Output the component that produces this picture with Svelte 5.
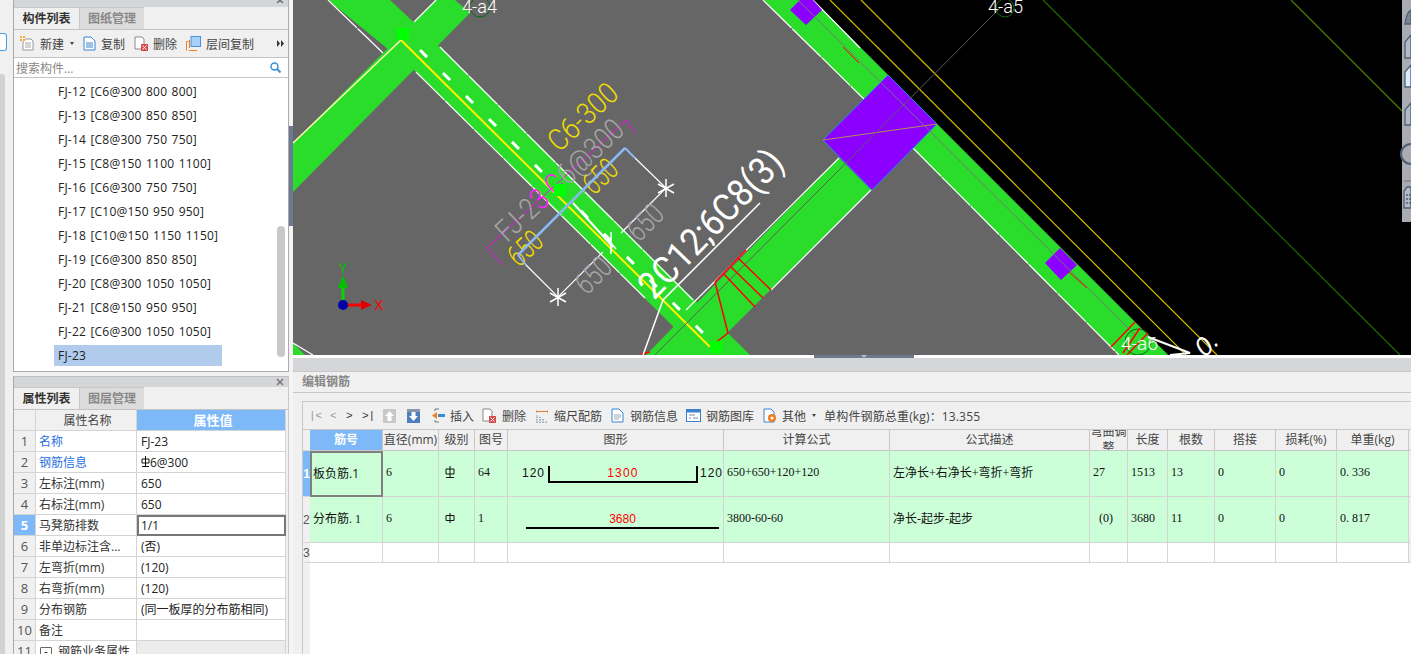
<script>
    const parts = [
        "FJ-12 [C6@300 800 800]", "FJ-13 [C8@300 850 850]", "FJ-14 [C8@300 750 750]",
        "FJ-15 [C8@150 1100 1100]", "FJ-16 [C6@300 750 750]", "FJ-17 [C10@150 950 950]",
        "FJ-18 [C10@150 1150 1150]", "FJ-19 [C6@300 850 850]", "FJ-20 [C8@300 1050 1050]",
        "FJ-21 [C8@150 950 950]", "FJ-22 [C6@300 1050 1050]", "FJ-23"
    ];

    const props = [
        { name: "名称", value: "FJ-23", link: true },
        { name: "钢筋信息", value: "6@300", link: true, symbol: true },
        { name: "左标注(mm)", value: "650" },
        { name: "右标注(mm)", value: "650" },
        { name: "马凳筋排数", value: "1/1", active: true },
        { name: "非单边标注含...", value: "(否)" },
        { name: "左弯折(mm)", value: "(120)" },
        { name: "右弯折(mm)", value: "(120)" },
        { name: "分布钢筋", value: "(同一板厚的分布筋相同)" },
        { name: "备注", value: "" }
    ];

    const heads = ["直径(mm)", "级别", "图号", "图形", "计算公式", "公式描述", "弯曲调整", "长度", "根数", "搭接", "损耗(%)", "单重(kg)"];

    const dashes = "M420 50 L704 334";
</script>

<div class="app">
    <div class="strip">
        <div class="strip-btn"></div>
        <div class="strip-track"></div>
    </div>

    <div class="left">
        <section class="panel list-panel">
            <div class="panel-head clipped">
                <svg class="close" width="8" height="8" viewBox="0 0 8 8"><path d="M1 1l6 6m0-6L1 7" stroke="#777" stroke-width="1.500"/></svg>
            </div>
            <div class="tabs">
                <div class="tab on">构件列表</div>
                <div class="tab">图纸管理</div>
            </div>
            <div class="tools">
                <div class="tool new">
                    <svg width="15" height="15" viewBox="0 0 15 15"><path d="M3 3h8l2 2v9H3z" fill="#fff" stroke="#999"/><path d="M5 7h6M5 9h6M5 11h6" stroke="#aaa"/><rect x="0" y="0" width="5" height="5" fill="#f8a030"/><path d="M0 2.500h5M2.500 0v5" stroke="#fff"/></svg>
                    <span>新建</span><i class="caret"></i>
                </div>
                <div class="tool copy">
                    <svg width="13" height="15" viewBox="0 0 13 15"><path d="M1 1h7l4 4v9H1z" fill="#fff" stroke="#3a82d0"/><path d="M3 7h7M3 9h7M3 11h7" stroke="#3a82d0"/></svg>
                    <span>复制</span>
                </div>
                <div class="tool del">
                    <svg width="14" height="15" viewBox="0 0 14 15"><path d="M1 1h7l2 2v10H1z" fill="#fff" stroke="#888"/><rect x="7" y="8" width="7" height="7" fill="#d84a4a"/><path d="M8.500 9.500l4 4m0-4l-4 4" stroke="#fff"/></svg>
                    <span>删除</span>
                </div>
                <div class="tool floor">
                    <svg width="15" height="15" viewBox="0 0 15 15"><path d="M.5 14.500v-9h2M3 14.500h8M3.500 12v-8" fill="none" stroke="#f08020"/><rect x="5" y="0.500" width="9.500" height="10" fill="#a8d0fa" stroke="#4a90e0"/></svg>
                    <span>层间复制</span>
                </div>
                <svg class="more" width="7" height="7" viewBox="0 0 7 7"><path d="M0 0l3 3.500L0 7zM4 0l3 3.500L4 7z" fill="#333"/></svg>
            </div>
            <div class="search">
                <span>搜索构件...</span>
                <svg width="11" height="11" viewBox="0 0 11 11"><circle cx="4.500" cy="4.500" r="3.500" fill="none" stroke="#3a8fd8" stroke-width="1.500"/><path d="M7 7l3.500 3.500" stroke="#3a8fd8" stroke-width="2"/></svg>
            </div>
            <ul class="parts">
                {#each parts as part, i}
                    <li class:sel={i === parts.length - 1}><span>{part}</span></li>
                {/each}
                <div class="scroll"></div>
            </ul>
        </section>

        <section class="panel prop-panel">
            <div class="panel-head">
                <svg class="close" width="8" height="8" viewBox="0 0 8 8"><path d="M1 1l6 6m0-6L1 7" stroke="#777" stroke-width="1.500"/></svg>
            </div>
            <div class="tabs">
                <div class="tab on">属性列表</div>
                <div class="tab">图层管理</div>
            </div>
            <div class="props">
                <div class="pnum phead"></div>
                <div class="pname phead center">属性名称</div>
                <div class="pval pblue">属性值</div>
                {#each props as p, i}
                    <div class="pnum" class:cur={p.active}>{i + 1}</div>
                    <div class="pname" class:link={p.link}>{p.name}</div>
                    <div class="pval" class:editing={p.active}>
                        {#if p.symbol}
                            <svg width="9" height="11" viewBox="0 0 9 11"><path d="M4.500 0v10M1 3h7v4H1zM1 10.500h7" fill="none" stroke="#111"/></svg>
                        {/if}{p.value}
                    </div>
                {/each}
                <div class="pnum">11</div>
                <div class="pname group"><i class="minus">-</i>钢筋业务属性</div>
                <div class="pval grey"></div>
            </div>
        </section>
    </div>

    <div class="splitter"><div class="handle"></div></div>

    <div class="right">
        <svg class="canvas" width="1118" height="355" viewBox="293 0 1118 355">
            <rect x="293" y="0" width="1118" height="355" fill="#666" />
            <path d="M813 0H1411V355H1168z" fill="#000" />

            <!-- bands -->
            <path d="M293 143L436 0H455L470 13L293 192z" fill="#2bdd2b" />
            <path d="M328 0H390L440 47L750 355H702L416 72z" fill="#2bdd2b" />
            <path d="M646 355L839 158L871 190L705 355z" fill="#2bdd2b" />
            <path d="M764 0H813L1168 355H1119z" fill="#2bdd2b" />
            <path d="M293 343L305 355H293z" fill="#2bdd2b" />

            <!-- band edges -->
            <g stroke="#fff" stroke-width="1.200" fill="none">
                <path d="M328 0L383 53M416 72L645 298M440 47L693 300M763 0L868 103M913 148L1119 355" stroke-dasharray="40 1" />
                <path d="M839 158L686 310M771 290L871 190" />
                <path d="M313 355L293 343M436 0L414 22M813 0L860 48" />
            </g>
            <path d="M293 143L401 40" stroke="#fffbb0" stroke-width="1.500" />
            <path d="M401 40L710 347" stroke="#ffee00" stroke-width="2" />
            <path d={dashes} stroke="#fff" stroke-width="3" stroke-dasharray="10 22.500" fill="none" />
            <path d="M573 203L613 247" stroke="#fff" stroke-width="2" />

            <!-- right side lines -->
            <path d="M830 0L1186 355M861 0L1217 355" stroke="#d0bc00" stroke-width="1.200" />
            <path d="M1043 0L1400 355" stroke="#1f6a00" stroke-width="1.200" />
            <path d="M1291 0L1402 111" stroke="#4c7c00" stroke-width="1.200" />

            <!-- columns -->
            <path d="M823 140L888 75L937 124L872 190z" fill="#8b00ff" stroke="#2a80ff" />
            <path d="M823 140L937 124" stroke="#b09060" />
            <path d="M1060 248L1077 265L1061 280L1045 263z" fill="#8b00ff" />
            <path d="M790 10L800 0H813L822 10L806 25z" fill="#8b00ff" />

            <!-- axis lines -->
            <path d="M1000 8L650 360" stroke="#5c5c5c" />
            <path d="M798 0L1135 335" stroke="#777" />
            <path d="M843 47L859 63M1069 272L1087 288" stroke="#f00" />

            <!-- grid bubbles -->
            <circle cx="480" cy="7" r="10" fill="none" stroke="#0a6a1a" />
            <text x="462" y="13" class="bubble" textLength="35" lengthAdjust="spacingAndGlyphs">4-a4</text>
            <circle cx="1005" cy="8" r="9" fill="none" stroke="#0a6a1a" />
            <text x="988" y="13" class="bubble" textLength="35" lengthAdjust="spacingAndGlyphs">4-a5</text>
            <circle cx="1138" cy="342" r="13" fill="none" stroke="#0a6a1a" />

            <!-- support rebar -->
            <path d="M1111 347L1135 322M1123 353L1140 328M1127 355L1148 333" stroke="#f00" stroke-width="1.500" />
            <text x="1121" y="350" class="bubble" textLength="37" lengthAdjust="spacingAndGlyphs">4-a6</text>
            <path d="M1148 337L1190 353L1170 355" stroke="#fff" stroke-width="2" fill="none" />
            <text transform="translate(1205 358) rotate(-45)" class="big">0.</text>

            <path d="M715 282L746 250M723 273L755 307M731 267L763 298M738 258L771 290M715 282L728 333L710 347M641 354L650 352" stroke="#f00" stroke-width="1.500" fill="none" />

            <!-- labels -->
            <path d="M487 248L626 120L635 133M487 248L503 265" stroke="#ff00ff" stroke-width="0.900" fill="none" />
            <text transform="translate(507 243) rotate(-43)" class="label" textLength="163" lengthAdjust="spacingAndGlyphs">FJ-2<tspan fill="#ff20ff">3 C</tspan>6@300</text>
            <text transform="translate(559 153) rotate(-43)" class="yellow" textLength="84" lengthAdjust="spacingAndGlyphs">C6-300</text>
            <text transform="translate(594 196) rotate(-43)" class="yellow" textLength="36" lengthAdjust="spacingAndGlyphs">650</text>
            <text transform="translate(519 268) rotate(-43)" class="yellow" textLength="36" lengthAdjust="spacingAndGlyphs">650</text>

            <!-- dimensions -->
            <path d="M518 255L625 148" stroke="#8ab8f4" stroke-width="2.500" fill="none" />
            <path d="M518 255L526 265M625 148L635 158" stroke="#8ab8f4" stroke-width="2" />
            <path d="M526 265L558 297L603 252M635 158L666 188L621 233" stroke="#fff" stroke-width="1.200" fill="none" />
            <path d="M558 288V306M550 293L566 302M550 302L566 293M666 179V197M658 184L674 193M658 193L674 184M611 232V254M606 237L616 249" stroke="#fff" stroke-width="1.500" />
            <text transform="translate(587 296) rotate(-45)" class="label" textLength="38" lengthAdjust="spacingAndGlyphs">650</text>
            <text transform="translate(639 243) rotate(-45)" class="label" textLength="38" lengthAdjust="spacingAndGlyphs">650</text>

            <text transform="translate(654 301) rotate(-46)" class="rebar" textLength="190" lengthAdjust="spacingAndGlyphs">2C12;6C8(3)</text>
            <path d="M760 203L663 300L643 355" stroke="#fff" stroke-width="1.500" fill="none" />

            <!-- points -->
            <rect x="397" y="28" width="12" height="12" fill="#00ff00" />
            <rect x="554" y="184" width="12" height="12" fill="#00ff00" />
            <rect x="710" y="341" width="12" height="12" fill="#00ff00" />

            <!-- ucs -->
            <path d="M343 305V285" stroke="#00d800" stroke-width="3" />
            <path d="M338 288L343 275L348 288z" fill="#00c000" />
            <text x="343" y="273" class="axis" fill="#00c000" text-anchor="middle">Y</text>
            <path d="M343 305H363" stroke="#f00" stroke-width="3" />
            <path d="M361 300L372 305L361 310z" fill="#e00000" />
            <text x="379" y="310" class="axis" fill="#f00" text-anchor="middle">X</text>
            <circle cx="343" cy="305" r="5" fill="#0000a8" />

            <!-- view cube strip -->
            <rect x="1402" y="0" width="9" height="222" fill="#a9acb2" />
            <g stroke="#4e6074" stroke-width="1.300" fill="#b4bac2">
                <path d="M1405 24C1406 16 1408 11 1411 10V24z" fill="#7c8690" />
                <path d="M1411 35L1405 42V58H1411z" />
                <path d="M1411 65L1405 72V87H1411z" fill="#dcebff" />
                <path d="M1411 103L1405 110V125H1411z" />
                <path d="M1411 144A10 10 0 0 0 1411 164" fill="none" stroke-width="2" />
                <path d="M1404 181H1411" stroke="#7c8084" />
                <path d="M1411 187H1407L1404 191V208H1411z" />
                <path d="M1406 195H1411M1406 199H1411M1406 203H1411" stroke-dasharray="2 1" />
            </g>
        </svg>

        <div class="sash"><div class="grip"><i></i></div></div>
        <div class="band"></div>
        <div class="title">编辑钢筋</div>

        <div class="editor">
            <div class="bar">
                <span class="nav">|&lt;</span><span class="nav n2">&lt;</span><span class="nav n3 dark">&gt;</span><span class="nav n4 dark">&gt;|</span>
                <svg class="i-up" width="13" height="14" viewBox="0 0 13 14"><rect width="13" height="14" fill="#c8c8c8"/><path d="M6.500 2L11 7H8.500v5h-4V7H2z" fill="#fff"/></svg>
                <svg class="i-down" width="13" height="14" viewBox="0 0 13 14"><rect width="13" height="14" fill="#4d7fc0"/><rect y="0" width="13" height="3" fill="#8a97a8"/><path d="M6.500 12L2 7h2.500V3h4v4H11z" fill="#fff"/></svg>
                <svg class="i-ins" width="13" height="15" viewBox="0 0 13 15"><path d="M3 1h4M3 14h4M3 1v2M3 12v2" stroke="#777" fill="none"/><path d="M6 6h7v3H6z" fill="#3a8ad0"/><path d="M0 7.500L5 4v7z" fill="#f08020"/></svg>
                <span class="lbl l-ins">插入</span>
                <svg class="i-del" width="14" height="15" viewBox="0 0 14 15"><path d="M1 1h7l2 2v10H1z" fill="#fff" stroke="#888"/><rect x="7" y="8" width="7" height="7" fill="#d84a4a"/><path d="M8.500 9.500l4 4m0-4l-4 4" stroke="#fff"/></svg>
                <span class="lbl l-del">删除</span>
                <svg class="i-scale" width="12" height="14" viewBox="0 0 12 14"><path d="M0 1v3M12 1v3M0 2.500h12" stroke="#e08030"/><path d="M1 14V6M4 14V8M7 14V10M10 14v-2" stroke="#5a7488" stroke-dasharray="1.500 1"/></svg>
                <span class="lbl l-scale">缩尺配筋</span>
                <svg class="i-info" width="13" height="15" viewBox="0 0 13 15"><path d="M1 1h7l4 4v9H1z" fill="#fff" stroke="#3a82d0"/><path d="M3 7h7M3 9h7M3 11h5" stroke="#9ab"/></svg>
                <span class="lbl l-info">钢筋信息</span>
                <svg class="i-lib" width="15" height="13" viewBox="0 0 15 13"><rect x=".5" y=".5" width="14" height="12" fill="#fff" stroke="#3a82d0"/><rect x=".5" y=".5" width="14" height="3" fill="#3a82d0"/><path d="M3 6h6M3 9h2M7 9h5" stroke="#7a8a98"/></svg>
                <span class="lbl l-lib">钢筋图库</span>
                <svg class="i-other" width="14" height="15" viewBox="0 0 14 15"><path d="M1 1h7l3 3v10H1z" fill="#fff" stroke="#3a82d0"/><circle cx="9" cy="10" r="4" fill="#f07c20"/><circle cx="9" cy="10" r="1.500" fill="#fff"/></svg>
                <span class="lbl l-other">其他</span><i class="caret c-other"></i>
                <span class="lbl l-total">单构件钢筋总重(kg)：13.355</span>
            </div>

            <div class="sheet">
                <div class="rh"></div>
                <div class="hd hd-blue">筋号</div>
                {#each heads as h, i}
                    <div class="hd" class:wrap={i === 6}>{h}</div>
                {/each}
                <div class="rest head-rest"></div>

                <div class="rh rh-on">1</div>
                <div class="c first on">板负筋.1</div>
                <div class="c on">6</div>
                <div class="c on sym">
                    <svg width="10" height="12" viewBox="0 0 10 12"><path d="M5 0v11M1 3h8v5H1zM1 11.500h8" fill="none" stroke="#111"/></svg>
                </div>
                <div class="c on">64</div>
                <div class="c on shape">
                    <span class="side left-side">120</span>
                    <div class="hook"><span>1300</span></div>
                    <span class="side">120</span>
                </div>
                <div class="c on">650+650+120+120</div>
                <div class="c on">左净长+右净长+弯折+弯折</div>
                <div class="c on">27</div>
                <div class="c on">1513</div>
                <div class="c on">13</div>
                <div class="c on">0</div>
                <div class="c on">0</div>
                <div class="c on">0. 336</div>
                <div class="rest"></div>

                <div class="rh">2</div>
                <div class="c on">分布筋. 1</div>
                <div class="c on">6</div>
                <div class="c on sym">
                    <svg width="10" height="10" viewBox="0 0 10 10"><path d="M5 0v10M1 2.500h8v5H1z" fill="none" stroke="#111"/></svg>
                </div>
                <div class="c on">1</div>
                <div class="c on shape">
                    <div class="straight"><span>3680</span></div>
                </div>
                <div class="c on">3800-60-60</div>
                <div class="c on">净长-起步-起步</div>
                <div class="c on pad">(0)</div>
                <div class="c on">3680</div>
                <div class="c on">11</div>
                <div class="c on">0</div>
                <div class="c on">0</div>
                <div class="c on">0. 817</div>
                <div class="rest"></div>

                <div class="rh">3</div>
                {#each heads as _}
                    <div class="c"></div>
                {/each}
                <div class="c"></div>
                <div class="rest"></div>

                <div class="rh"></div>
                <div class="empty"></div>
            </div>
        </div>
    </div>
</div>

<style>
    :global(body) {
        margin: 0;
        background: #f0f0f0;
    }

    .app {
        width: 1411px;
        height: 654px;
        display: grid;
        grid-template-columns: 13px 276px 4px 1118px;
        overflow: hidden;
        font: 12px "Open Sans", "Noto Sans CJK SC", sans-serif;
        color: #222;
    }

    /* far left strip */
    .strip {
        background: #f0f0f0;
        display: flex;
        flex-direction: column;
    }

    .strip-btn {
        width: 6px;
        height: 16px;
        margin-top: 33px;
        background: #fff;
        border: 1px solid #4a9ee8;
        border-left: 0;
        border-radius: 0 3px 3px 0;
    }

    .strip-track {
        width: 5px;
        flex: 1;
        margin-top: 23px;
        background: #d2d2d2;
        border-radius: 0 3px 0 0;
    }

    /* left panels */
    .left {
        display: flex;
        flex-direction: column;
        gap: 4px;
    }

    .panel {
        box-sizing: border-box;
        border: 1px solid #aaa;
        display: flex;
        flex-direction: column;
        background: #f0f0f0;
    }

    .list-panel {
        height: 372px;
        border-top: 0;
    }

    .prop-panel {
        flex: 1;
        border-bottom: 0;
        border-right: 1px solid #c8c8c8;
        border-top: 1px solid #c0c0c0;
    }

    .panel-head {
        height: 10px;
        background: #d4d6da;
        position: relative;
        flex: none;
    }

    .panel-head.clipped {
        height: 7px;
        overflow: hidden;
    }

    .close {
        position: absolute;
        right: 4px;
        top: 1px;
    }

    .clipped .close {
        top: -4px;
    }

    .tabs {
        display: flex;
        height: 23px;
        flex: none;
        box-sizing: border-box;
        border-bottom: 1px solid #c4c4c4;
    }

    .tab {
        width: 65px;
        text-align: center;
        line-height: 22px;
        font-weight: 700;
        color: #888;
        background: #dcdcdc;
        box-sizing: border-box;
        border-left: 1px solid #c8c8c8;
        border-top: 1px solid #c8c8c8;
    }

    .tab.on {
        color: #333;
        background: #f0f0f0;
        border-left: 0;
    }

    .tools {
        height: 28px;
        flex: none;
        display: flex;
        align-items: center;
        box-sizing: border-box;
        border-bottom: 1px solid #c4c4c4;
        position: relative;
        color: #444;
    }

    .tool {
        display: flex;
        align-items: center;
        gap: 5px;
        white-space: nowrap;
    }

    .new {
        margin-left: 6px;
    }

    .copy {
        margin-left: 9px;
    }

    .del {
        margin-left: 9px;
    }

    .floor {
        margin-left: 9px;
    }

    .caret {
        display: inline-block;
        border: 2px solid transparent;
        border-top: 3px solid #444;
        border-bottom: 0;
        margin-left: 1px;
    }

    .more {
        margin-left: auto;
        margin-right: 4px;
    }

    .search {
        height: 19px;
        flex: none;
        background: #fff;
        border-bottom: 1px solid #c4c4c4;
        display: flex;
        align-items: center;
        justify-content: space-between;
        padding: 0 7px 0 2px;
        color: #888;
    }

    .parts {
        list-style: none;
        margin: 0;
        padding: 2px 0 0 40px;
        flex: 1;
        background: #fff;
        position: relative;
    }

    .parts li {
        height: 24px;
        line-height: 24px;
        white-space: nowrap;
        color: #222;
        word-spacing: 1px;
        letter-spacing: 0.22px;
    }

    .parts li span {
        padding-left: 4px;
    }

    .parts li.sel {
        width: 168px;
        height: 21px;
        margin-top: 1px;
        line-height: 21px;
        background: #b0cbec;
    }

    .scroll {
        position: absolute;
        top: 148px;
        right: 3px;
        width: 8px;
        height: 131px;
        border-radius: 4px;
        background: #c8c8c8;
    }

    .props {
        display: grid;
        grid-template-columns: 22px 101px 149px;
        grid-auto-rows: 21px;
        flex: 1;
    }

    .props > div {
        box-sizing: border-box;
        border-right: 1px solid #d4d4d4;
        border-bottom: 1px solid #d4d4d4;
        white-space: nowrap;
        overflow: hidden;
        line-height: 21px;
    }

    .pnum {
        background: #f0f0f0;
        text-align: center;
        font-size: 13px;
        color: #555;
    }

    .pnum.cur {
        background: #7db8f8;
        color: #fff;
        font-weight: 700;
    }

    .pname {
        background: #fff;
        padding-left: 3px;
        color: #333;
    }

    .pname.link {
        color: #2a6fe0;
    }

    .phead {
        background: #f0f0f0;
    }

    .center {
        text-align: center;
        color: #444;
    }

    .pval {
        background: #fff;
        padding-left: 4px;
    }

    .pblue {
        background: #7db8f8;
        color: #fff;
        font-weight: 700;
        text-align: center;
        font-size: 13px;
    }

    .props > .editing {
        border: 2px solid #777;
        line-height: 17px;
        padding-left: 2px;
    }

    .pval.grey {
        background: #ececec;
    }

    .minus {
        display: inline-block;
        width: 10px;
        height: 10px;
        line-height: 8px;
        margin: 0 6px 0 1px;
        text-align: center;
        font-style: normal;
        border: 1px solid #666;
        border-radius: 1px;
    }

    /* splitter */
    .splitter {
        background: #f4f4f4;
        padding-top: 126px;
    }

    .handle {
        height: 100px;
        background: #6b7a8f;
    }

    /* right side */
    .right {
        display: flex;
        flex-direction: column;
        min-width: 0;
    }

    .canvas {
        display: block;
        flex: none;
    }

    .bubble {
        font: 18px "Roboto", "Liberation Sans", sans-serif;
        font-weight: 300;
        fill: #fff;
    }

    .big {
        font: italic 26px "Liberation Sans", sans-serif;
        fill: #fff;
    }

    .label {
        font: 30px "Roboto", "Liberation Sans", sans-serif;
        font-weight: 300;
        fill: #a6a6a6;
    }

    .yellow {
        font: 30px "Roboto", "Liberation Sans", sans-serif;
        font-weight: 300;
        fill: #f0dc00;
    }

    .rebar {
        font: 38px "Roboto", "Liberation Sans", sans-serif;
        font-weight: 400;
        fill: #fff;
    }

    .axis {
        font: 14px "Liberation Sans", sans-serif;
    }

    .sash {
        height: 3px;
        background: #fff;
        flex: none;
        padding-left: 521px;
    }

    .grip {
        width: 100px;
        height: 3px;
        background: #6b7a8f;
        display: flex;
        justify-content: center;
    }

    .grip i {
        border: 3px solid transparent;
        border-top: 3px solid #bbb;
        border-bottom: 0;
    }

    .band {
        height: 13px;
        background: #d4d6da;
        flex: none;
    }

    .title {
        height: 22px;
        flex: none;
        box-sizing: border-box;
        padding-left: 9px;
        line-height: 20px;
        color: #888;
        font-weight: 700;
        border-top: 1px solid #c8c8c8;
        border-bottom: 1px solid #c8c8c8;
    }

    .editor {
        flex: 1;
        margin: 8px 0 0 9px;
        border-top: 1px solid #c8c8c8;
        border-left: 1px solid #c8c8c8;
        display: flex;
        flex-direction: column;
        min-height: 0;
    }

    .bar {
        height: 28px;
        flex: none;
        display: flex;
        align-items: center;
        color: #444;
        white-space: nowrap;
        border-bottom: 1px solid #c8c8c8;
        box-sizing: border-box;
    }

    .nav {
        font: 11px "Liberation Mono", monospace;
        color: #999;
        margin-left: 6px;
        width: 11px;
    }

    .nav.n2 {
        margin-left: 10px;
        width: 6px;
    }

    .nav.n3 {
        margin-left: 10px;
        width: 6px;
    }

    .nav.n4 {
        margin-left: 10px;
    }

    .nav.dark {
        color: #333;
    }

    .i-up { margin-left: 10px; }
    .i-down { margin-left: 11px; }
    .i-ins { margin-left: 12px; }
    .l-ins { margin-left: 5px; }
    .i-del { margin-left: 8px; }
    .l-del { margin-left: 6px; }
    .i-scale { margin-left: 10px; }
    .l-scale { margin-left: 6px; }
    .i-info { margin-left: 9px; }
    .l-info { margin-left: 6px; }
    .i-lib { margin-left: 8px; }
    .l-lib { margin-left: 5px; }
    .i-other { margin-left: 9px; }
    .l-other { margin-left: 5px; }
    .c-other { margin-left: 6px; }
    .l-total { margin-left: 8px; letter-spacing: 0.15px; }

    .sheet {
        flex: 1;
        display: grid;
        grid-template-columns: 7px 73px 56px 36px 33px 216px 166px 200px 38px 40px 47px 61px 61px 72px 1fr;
        grid-template-rows: 21px 46px 46px 20px 1fr;
        background: #fff;
        min-height: 0;
    }

    .sheet > div {
        box-sizing: border-box;
        overflow: hidden;
    }

    .rh {
        background: #f0f0f0;
        font: 12px/1 "Liberation Sans", sans-serif;
        color: #555;
        display: flex;
        align-items: center;
        border-bottom: 1px solid #d8d8d8;
    }

    .rh-on {
        background: #7db8f8;
        color: #fff;
        font-weight: 700;
        justify-content: center;
    }

    .hd {
        background: #f0f0f0;
        color: #444;
        text-align: center;
        line-height: 20px;
        white-space: nowrap;
        border-right: 1px solid #c8c8c8;
        border-bottom: 1px solid #c8c8c8;
    }

    .hd.wrap {
        white-space: normal;
        line-height: 16px;
        display: flex;
        align-items: center;
    }

    .hd-blue {
        background: #7db8f8;
        color: #fff;
        font-weight: 700;
    }

    .rest {
        background: #f0f0f0;
        border-bottom: 1px solid #d8d8d8;
    }

    .head-rest {
        border-bottom: 1px solid #c8c8c8;
    }

    .c {
        background: #fff;
        border-right: 1px solid #d4d4d4;
        border-bottom: 1px solid #d4d4d4;
        padding: 0 0 3px 3px;
        display: flex;
        align-items: center;
        white-space: pre;
        font: 12px "Liberation Serif", "Noto Sans CJK SC", serif;
        color: #111;
    }

    .c.on {
        background: #ccffd8;
    }

    .c.first {
        border: 2px solid #808080;
        padding-left: 1px;
        font-family: "Open Sans", "Noto Sans CJK SC", sans-serif;
    }

    .c.sym {
        padding-left: 6px;
    }

    .c.pad {
        padding-left: 9px;
    }

    .c.shape {
        padding: 0;
    }

    .side {
        flex: none;
        width: 24px;
        margin-left: 2px;
        padding-bottom: 1px;
        letter-spacing: 1px;
        font-family: "Liberation Sans", sans-serif;
    }

    .left-side {
        width: 37px;
        margin-left: 0;
        text-align: right;
        box-sizing: border-box;
    }

    .hook {
        flex: none;
        width: 150px;
        height: 17px;
        margin: 1px 0 0 3px;
        box-sizing: border-box;
        border: 2px solid #000;
        border-top: 0;
        text-align: center;
        line-height: 14px;
        letter-spacing: 1.2px;
        font-family: "Liberation Sans", sans-serif;
        color: #f00;
    }

    .straight {
        flex: none;
        width: 193px;
        height: 19px;
        margin: 0 0 1px 18px;
        box-sizing: border-box;
        border-bottom: 2px solid #000;
        text-align: center;
        line-height: 18px;
        font-family: "Liberation Sans", sans-serif;
        color: #f00;
    }

    .empty {
        grid-column: 2 / -1;
        background: #fff;
    }
</style>
